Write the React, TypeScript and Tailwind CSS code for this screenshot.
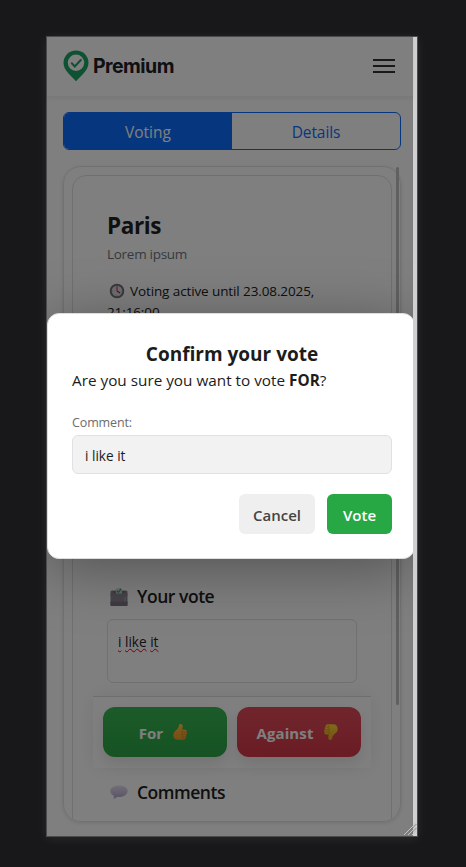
import React from "react";

function Logo() {
  return (
    <svg width="26" height="32" viewBox="0 0 26 32" className="shrink-0">
      <path d="M13 .5C6 .5.5 6 .5 12.8c0 4.300 2.100 7.300 5 10.800L13 31.300l7.500-7.700c2.900-3.500 5-6.500 5-10.800C25.500 6 20 .5 13 .5Z" fill="#1fa366" />
      <circle cx="13" cy="12.700" r="8.200" fill="#fff" />
      <path d="m8.800 13.300 3 3.100 6-6.400" fill="none" stroke="#1fa366" strokeWidth="2.100" strokeLinecap="round" />
    </svg>
  );
}

function Clock() {
  return (
    <svg width="16" height="16" viewBox="0 0 16 16" className="shrink-0">
      <circle cx="8" cy="8" r="6.300" fill="#dedbe1" stroke="#77737c" strokeWidth="2" />
      <path d="M8 8V3.200" stroke="#e13b62" strokeWidth="1.200" />
      <path d="m8 8 3.200 2" stroke="#55515a" strokeWidth="1.300" />
      <path d="M8 3v1M8 12v1M3 8h1M12 8h1" stroke="#a5a0aa" strokeWidth=".8" />
    </svg>
  );
}

function BallotBox() {
  return (
    <svg width="20" height="20" viewBox="0 0 20 20" className="shrink-0">
      <path d="m1.500 4.500 1.300-1h14.400l1.300 1v4h-17Z" fill="#8a8591" />
      <path d="M1.500 7h17v11a1 1 0 0 1-1 1h-15a1 1 0 0 1-1-1Z" fill="#8c8793" />
      <path d="M1.500 14.500h17V18a1 1 0 0 1-1 1h-15a1 1 0 0 1-1-1Z" fill="#7d7687" />
      <path d="M4 5h12" stroke="#6b6673" />
      <path d="m6.600 1.500 5.600-.6.900 5.600H7.200Z" fill="#cdd3d8" />
      <path d="m7.900 3.900 1.500 1.500 2.700-3.600" fill="none" stroke="#27a76a" strokeWidth="1.200" />
      <path d="M15.500 10h1.300v4.500h-1.300Z" fill="#aaa5b2" />
    </svg>
  );
}

function Bubble() {
  return (
    <svg width="20" height="18" viewBox="0 0 20 18" className="shrink-0">
      <defs>
        <linearGradient id="bubble" x1="0" y1="0" x2="0" y2="1">
          <stop offset="0" stopColor="#e5dfee" />
          <stop offset="1" stopColor="#b5a5cd" />
        </linearGradient>
      </defs>
      <path d="M10 2.500c5 0 8.600 2.200 8.600 5.500S15 14 10 14c-.7 0-1.400 0-2-.1-.9.900-2.100 1.500-3.700 1.600.6-.8.700-1.700.4-2.800C2.600 11.700 1.400 10 1.400 8 1.400 4.700 5 2.500 10 2.500Z" fill="url(#bubble)" />
    </svg>
  );
}

function Thumb({ down = false }: { down?: boolean }) {
  const top = down ? "#e5a91e" : "#ffc044";
  const bottom = down ? "#ffd23c" : "#f39a22";
  const id = down ? "thumb-down" : "thumb-up";
  return (
    <svg width="16" height="18" viewBox="0 0 16 18" className={down ? "shrink-0 rotate-180" : "shrink-0"}>
      <defs>
        <linearGradient id={id} x1="0" y1="0" x2="0" y2="1">
          <stop offset="0" stopColor={top} />
          <stop offset="1" stopColor={bottom} />
        </linearGradient>
      </defs>
      <path d="M8 1.100c1.900-.5 3 .8 2.700 2.600l-.5 2.900h2.500c1.300 0 2 .8 1.900 1.900.4.700.4 1.500-.1 2.200.2.700.1 1.400-.4 2 .2.800 0 1.500-.6 2-.2 1.200-1 2-2.300 2H5.800C3 16.700 1.300 14.900 1.300 12.200c0-1.900.6-3.100 2-4.300 2-1.600 3.200-3 3.600-5.200.1-.8.400-1.400 1.100-1.600Z" fill={`url(#${id})`} />
      <path d="M10.200 6.600c-.8.600-.9 1.600-.2 2.400-.6.700-.5 1.700.1 2.400-.4.800-.2 1.600.4 2.200-.3.900 0 1.700.6 2.300M10 9.100h4.300M10.200 11.500h4.100M10.500 13.900h3.200" fill="none" stroke={down ? "#c48b14" : "#c87817"} strokeWidth=".6" />
    </svg>
  );
}

function Header() {
  return (
    <header className="flex h-[60px] shrink-0 items-center justify-between border-b border-[#f3f3f3] pr-[18px] pb-0.5 pl-4 shadow-[0_2px_4px_rgba(0,0,0,0.06)]">
      <div className="flex items-center gap-1">
        <Logo />
        <span className="font-[Inter] text-[19.500px] leading-6 font-bold tracking-[-0.550px] text-[#202124]">Premium</span>
      </div>
      <div className="flex w-[22px] flex-col gap-1">
        <i className="h-0.5 bg-[#333]" />
        <i className="h-0.5 bg-[#333]" />
        <i className="h-0.5 bg-[#333]" />
      </div>
    </header>
  );
}

function VotingPage() {
  return (
    <div className="flex h-full w-[366px] flex-col bg-white">
      <Header />
      <div className="mt-[15px] ml-4 flex h-[38px] w-[338px] shrink-0 overflow-hidden rounded-md border border-[#0d6efd] text-[15.500px]">
        <div className="flex w-[168px] items-center justify-center bg-[#0d6efd] pt-1 text-white">Voting</div>
        <div className="flex flex-1 items-center justify-center pt-1 tracking-[-0.100px] text-[#0d6efd]">Details</div>
      </div>
      <div className="mt-4 ml-4 flex shrink-0">
        <div className="flex h-[656px] w-[338px] shrink-0 overflow-hidden rounded-[18px] border border-[#e3e3e3] pl-2 shadow-[0_1px_4px_rgba(0,0,0,0.12)]">
          <main className="mt-2 h-[700px] w-[320px] shrink-0 rounded-[14px] border border-[#e0e0e0] text-[#212121]">
            <section className="h-[401px] px-[34px] pt-[34px]">
              <h1 className="text-[22.500px] leading-8 font-bold tracking-[-0.400px]">Paris</h1>
              <p className="text-[13.500px] leading-6 tracking-[-0.280px] text-[#6c757d]">Lorem ipsum</p>
              <p className="mt-[15px] text-[13.500px] leading-[21px] tracking-[-0.110px] whitespace-nowrap">
                <span className="mr-[5px] ml-0.5 inline-block align-[-3px]"><Clock /></span>
                Voting active until 23.08.2025,<br />21:16:00
              </p>
            </section>
            <section className="px-[34px]">
              <h2 className="flex h-[38px] items-center gap-2 pt-px pl-0.5 text-[17.500px] font-semibold tracking-[-0.450px]"><BallotBox />Your vote</h2>
              <div className="mt-1 h-[64px] w-[250px] rounded-md border border-[#dee2e6] px-[10px] pt-3 text-[13.600px] leading-5 text-[#212529]">
                <span className="underline decoration-red-600 decoration-wavy decoration-1 underline-offset-1">i</span>{" "}
                <span className="underline decoration-red-600 decoration-wavy decoration-1 underline-offset-1">like</span>{" "}
                <span className="underline decoration-red-600 decoration-wavy decoration-1 underline-offset-1">it</span>
              </div>
            </section>
            <div className="mt-[13px] ml-5 flex h-[72px] w-[278px] gap-[10px] border-t border-[#ddd] bg-white px-[10px] pt-[10px] text-[15px] font-bold text-white shadow-[0_0_18px_rgba(0,0,0,0.08)]">
              <div className="flex h-[50px] w-[124px] items-center justify-center gap-[9px] rounded-xl bg-linear-to-b from-[#38b653] to-[#2da547] pt-[3px] pr-[3px] shadow-[0_6px_14px_rgba(0,0,0,0.1)]">For <span className="-mt-[3px]"><Thumb /></span></div>
              <div className="flex h-[50px] w-[124px] items-center justify-center gap-[9px] rounded-xl bg-linear-to-b from-[#e14b5a] to-[#d63848] pt-[3px] pr-[3px] tracking-[0.100px] shadow-[0_6px_14px_rgba(0,0,0,0.1)]">Against <span className="-mt-[3px]"><Thumb down /></span></div>
            </div>
            <h2 className="mt-[7px] flex h-[34px] items-center gap-2 pl-9 text-[17.500px] font-semibold tracking-[-0.480px]"><Bubble />Comments</h2>
          </main>
        </div>
        <div className="mt-px -ml-[5px] h-[538px] w-[3px] shrink-0 rounded-full bg-[#c0c0c0]" />
      </div>
    </div>
  );
}

function ConfirmDialog() {
  return (
    <div className="absolute inset-y-0 left-0 flex w-[366px] flex-col overflow-hidden bg-black/50 pt-[276px]">
      <div className="h-[246px] w-[368px] rounded-xl border border-[#ddd] bg-white px-6 pt-6 text-[#1c1c1c] shadow-[0_10px_60px_rgba(0,0,0,0.35)]">
        <h2 className="pl-0.5 text-center text-[19px] leading-8 font-bold">Confirm your vote</h2>
        <p className="-mt-px text-[15.300px] leading-[22px]">Are you sure you want to vote <b>FOR</b>?</p>
        <p className="mt-[22px] text-[12.500px] leading-5 tracking-[-0.120px] text-[#6c6c6c]">Comment:</p>
        <div className="mt-[2px] flex h-[39px] w-[320px] items-center rounded-md border border-[#dee2e6] bg-[#f2f2f2] px-3 pt-[3px] text-[13.600px]">i like it</div>
        <div className="mt-5 flex w-[320px] justify-end gap-3 text-[15px] font-semibold">
          <div className="flex h-10 w-[76px] items-center justify-center rounded-md bg-[#efefef] pt-[3px] text-[#444]">Cancel</div>
          <div className="flex h-10 w-[65px] items-center justify-center rounded-md bg-[#28a745] pt-[3px] text-white">Vote</div>
        </div>
      </div>
    </div>
  );
}

export default function App() {
  return (
    <div className="h-[867px] w-[466px] overflow-hidden bg-[#18181a] pt-9 pl-[46px] font-['Open_Sans','Noto_Sans',sans-serif]">
      <div className="relative h-[801px] w-[372px] border border-[#4b4b4d] bg-[#d0d0d0] shadow-[0_2px_10px_rgba(255,255,255,0.08)]">
        <VotingPage />
        <ConfirmDialog />
        <svg width="14" height="14" viewBox="0 0 14 14" className="absolute right-0 bottom-0">
          <path d="M1 13 13 1M5 13l8-8M9 13l4-4" stroke="#c4c4c4" />
          <path d="M2 13.500 13.500 2M6 13.500 13.500 6" stroke="#777" strokeWidth=".8" />
        </svg>
      </div>
    </div>
  );
}
